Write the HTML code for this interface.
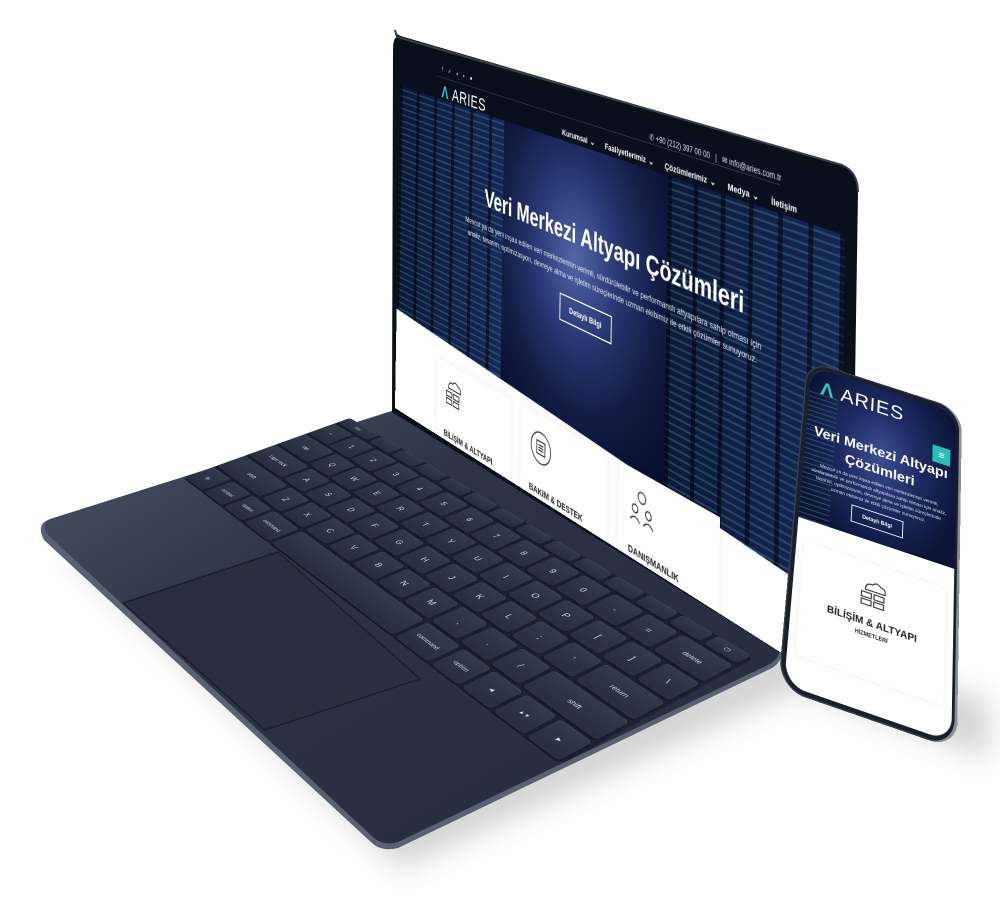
<!DOCTYPE html>
<html><head><meta charset="utf-8"><style>
*{margin:0;padding:0;box-sizing:border-box}
body{width:1000px;height:904px;background:#fff;overflow:hidden;font-family:"Liberation Sans",sans-serif}
#wrap{position:relative;width:1000px;height:904px;overflow:hidden;background:#fff}
.hm{position:absolute;left:0;top:0;transform-origin:0 0}
#kb{width:1450px;height:550px;background:#1c2130;border-radius:20px}
.row{position:absolute;left:0;display:flex}
.k{height:100%;margin-right:10px;background:linear-gradient(#333a4c,#282e3f);border-radius:10px;color:#d4d8e2;font-size:24px;display:flex;align-items:center;justify-content:center;box-shadow:inset 0 2px 0 rgba(255,255,255,.08),0 3px 4px rgba(0,0,0,.5)}
#scr{width:1000px;height:640px;background:#fff;overflow:hidden}
#hero{position:absolute;left:0;top:0;width:1000px;height:540px;clip-path:polygon(0 0,100% 0,100% 100%,0 86%);background:radial-gradient(ellipse 260px 330px at 48% 45%,#5466a8 0%,#2b3a78 35%,#141c45 70%,#0a1030 100%)}
.rack{position:absolute;top:40px;bottom:0;background:repeating-linear-gradient(90deg,rgba(0,0,0,.55) 0 8px,rgba(0,0,0,0) 8px 52px),repeating-linear-gradient(0deg,rgba(90,220,170,.22) 0 3px,rgba(0,0,0,0) 3px 11px),linear-gradient(90deg,#0d1738,#182659)}
.card{position:absolute;background:#fff;box-shadow:0 0 12px rgba(0,0,0,.08);width:205px;height:210px;font-weight:bold;font-size:15px;color:#222}
#ph{width:380px;height:770px;border-radius:58px;background:#1b1f2a;box-shadow:inset -6px 0 0 #8a8e98,inset 0 0 0 3px #3a3f4c}
#phs{position:absolute;left:12px;top:12px;width:356px;height:746px;border-radius:46px;overflow:hidden;background:#fff}
</style></head><body><div id="wrap">
<svg width="1000" height="904" style="position:absolute;left:0;top:0">
<defs>
<linearGradient id="bg" x1="0" y1="0" x2="1" y2="1"><stop offset="0" stop-color="#4d5567"/><stop offset=".35" stop-color="#2e3446"/><stop offset="1" stop-color="#262c3c"/></linearGradient>
<filter id="bl"><feGaussianBlur stdDeviation="14"/></filter>
</defs>
<path d="M60,545 L400,870 L800,690 L990,760 L990,700 L800,640 Z" fill="#000" opacity=".16" filter="url(#bl)"/>
<path d="M48,520 Q36,525 44,540 L372,843 Q382,852 398,848 L772,668 Q782,662 782,650 L395,410 Z" fill="#5a6170"/>
<path d="M50,519 Q40,524 48,535 L374,838 Q384,846 398,842 L770,664 Q779,658 780,650 L395,410 Z" fill="url(#bg)"/>
<path d="M123,603 L278,552 L420,679 L265,730 Z" fill="#2a3040" stroke="#1b1f2c" stroke-width="1.5"/>
<path d="M395,30 Q396,35 404,37 L842,165 Q858,172 858,192 L850,700 L780,652 L392,412 L393,50 Q393,38 397,37 Z" fill="#0b0f19"/>
<path d="M395,30 L397,37 L842,165 Q858,172 858,192" fill="none" stroke="#3a3f4c" stroke-width="2"/>
</svg>
<div id="kb" class="hm">
<div class="row" style="top:0;height:45px"><div class="k" style="width:140px;font-size:16px">esc</div><div class="k" style="width:90px"></div><div class="k" style="width:90px"></div><div class="k" style="width:90px"></div><div class="k" style="width:90px"></div><div class="k" style="width:90px"></div><div class="k" style="width:90px"></div><div class="k" style="width:90px"></div><div class="k" style="width:90px"></div><div class="k" style="width:90px"></div><div class="k" style="width:90px"></div><div class="k" style="width:90px"></div><div class="k" style="width:90px"></div><div class="k" style="width:90px;font-size:18px">⏻</div></div>
<div class="row" style="top:55px;height:90px"><div class="k" style="width:90px">~</div><div class="k" style="width:90px">1</div><div class="k" style="width:90px">2</div><div class="k" style="width:90px">3</div><div class="k" style="width:90px">4</div><div class="k" style="width:90px">5</div><div class="k" style="width:90px">6</div><div class="k" style="width:90px">7</div><div class="k" style="width:90px">8</div><div class="k" style="width:90px">9</div><div class="k" style="width:90px">0</div><div class="k" style="width:90px">-</div><div class="k" style="width:90px">=</div><div class="k" style="width:140px;font-size:18px">delete</div></div>
<div class="row" style="top:155px;height:90px"><div class="k" style="width:140px;font-size:18px">tab</div><div class="k" style="width:90px">Q</div><div class="k" style="width:90px">W</div><div class="k" style="width:90px">E</div><div class="k" style="width:90px">R</div><div class="k" style="width:90px">T</div><div class="k" style="width:90px">Y</div><div class="k" style="width:90px">U</div><div class="k" style="width:90px">I</div><div class="k" style="width:90px">O</div><div class="k" style="width:90px">P</div><div class="k" style="width:90px">[</div><div class="k" style="width:90px">]</div><div class="k" style="width:90px">\</div></div>
<div class="row" style="top:255px;height:90px"><div class="k" style="width:165px;font-size:18px">caps lock</div><div class="k" style="width:90px">A</div><div class="k" style="width:90px">S</div><div class="k" style="width:90px">D</div><div class="k" style="width:90px">F</div><div class="k" style="width:90px">G</div><div class="k" style="width:90px">H</div><div class="k" style="width:90px">J</div><div class="k" style="width:90px">K</div><div class="k" style="width:90px">L</div><div class="k" style="width:90px">;</div><div class="k" style="width:90px">'</div><div class="k" style="width:165px;font-size:18px">return</div></div>
<div class="row" style="top:355px;height:90px"><div class="k" style="width:215px;font-size:18px">shift</div><div class="k" style="width:90px">Z</div><div class="k" style="width:90px">X</div><div class="k" style="width:90px">C</div><div class="k" style="width:90px">V</div><div class="k" style="width:90px">B</div><div class="k" style="width:90px">N</div><div class="k" style="width:90px">M</div><div class="k" style="width:90px">,</div><div class="k" style="width:90px">.</div><div class="k" style="width:90px">/</div><div class="k" style="width:215px;font-size:18px">shift</div></div>
<div class="row" style="top:455px;height:90px"><div class="k" style="width:90px;font-size:18px">fn</div><div class="k" style="width:90px;font-size:16px">control</div><div class="k" style="width:90px;font-size:16px">option</div><div class="k" style="width:115px;font-size:16px">command</div><div class="k" style="width:490px"></div><div class="k" style="width:115px;font-size:16px">command</div><div class="k" style="width:90px;font-size:16px">option</div><div class="k" style="width:90px;font-size:14px">◀</div><div class="k" style="width:90px;font-size:14px">▲▼</div><div class="k" style="width:90px;font-size:14px">▶</div></div>
</div>
<div id="scr" class="hm">
<div id="hero">
<div class="rack" style="left:0;width:300px"></div>
<div class="rack" style="left:680px;width:320px"></div>
<div style="position:absolute;left:0;top:0;width:1000px;height:70px;background:#0a0f1e"></div>
<div style="position:absolute;left:125px;top:12px;color:#fff;font-size:11px;letter-spacing:6px">f ✓ ▪ ▪ ●</div>
<div style="position:absolute;left:110px;top:32px;width:780px;height:1px;background:#3a4060"></div>
<div style="position:absolute;left:125px;top:40px;color:#fff;font-size:30px;letter-spacing:1px"><span style="color:#3cc6c0;font-weight:bold">Λ</span> ARIES</div>
<div style="position:absolute;left:640px;top:16px;color:#dfe3ee;font-size:12px">✆ +90 (212) 397 00 00 &nbsp; | &nbsp; ✉ info@aries.com.tr</div>
<div style="position:absolute;left:445px;top:50px;color:#fff;font-size:13px;font-weight:bold;word-spacing:2px">Kurumsal ⌄ &nbsp;&nbsp; Faaliyetlerimiz ⌄ &nbsp;&nbsp; Çözümlerimiz ⌄ &nbsp;&nbsp; Medya ⌄ &nbsp;&nbsp; İletişim</div>
<div style="position:absolute;left:40px;width:1000px;top:185px;text-align:center;color:#fff;font-size:40px;font-weight:bold">Veri Merkezi Altyapı Çözümleri</div>
<div style="position:absolute;left:180px;width:700px;top:245px;text-align:center;color:#e4e8f2;font-size:13px;line-height:20px">Mevcut ya da yeni inşaa edilen veri merkezlerinin verimli, sürdürülebilir ve performanslı altyapılara sahip olması için analiz, tasarım, optimizasyon, devreye alma ve işletim süreçlerinde uzman ekibimiz ile etkili çözümler sunuyoruz.</div>
<div style="position:absolute;left:445px;top:305px;width:120px;height:42px;border:2px solid #fff;color:#fff;font-size:13px;font-weight:bold;text-align:center;line-height:38px">Detaylı Bilgi</div>
</div>
<div class="card" style="left:125px;top:510px"><svg width="60" height="50" style="position:absolute;left:20px;top:20px" fill="none" stroke="#333" stroke-width="2"><path d="M14,20 Q14,8 26,10 Q32,2 40,10 Q50,10 48,20 Z"/><rect x="8" y="26" width="16" height="8"/><rect x="28" y="26" width="16" height="8"/><rect x="8" y="38" width="16" height="8"/><rect x="28" y="38" width="16" height="8"/></svg><div style="position:absolute;left:22px;top:110px">BİLİŞİM &amp; ALTYAPI<br><span style="font-size:11px">HİZMETLERİ</span></div><div style="position:absolute;right:20px;bottom:25px;color:#aaa">→</div></div>
<div class="card" style="left:355px;top:510px"><svg width="60" height="60" style="position:absolute;left:20px;top:20px" fill="none" stroke="#333" stroke-width="2"><circle cx="30" cy="30" r="24"/><rect x="20" y="20" width="20" height="20"/><path d="M24,26h12M24,30h12M24,34h12"/></svg><div style="position:absolute;left:22px;top:110px">BAKIM &amp; DESTEK<br><span style="font-size:11px">HİZMETLERİ</span></div><div style="position:absolute;right:20px;bottom:25px;color:#aaa">→</div></div>
<div class="card" style="left:585px;top:510px"><svg width="60" height="60" style="position:absolute;left:20px;top:20px" fill="none" stroke="#333" stroke-width="2"><circle cx="30" cy="16" r="8"/><circle cx="16" cy="36" r="6"/><circle cx="44" cy="36" r="6"/><path d="M6,54 Q16,42 26,54M34,54 Q44,42 54,54"/></svg><div style="position:absolute;left:22px;top:110px">DANIŞMANLIK<br><span style="font-size:11px">HİZMETLERİ</span></div><div style="position:absolute;right:20px;bottom:25px;color:#aaa">→</div></div>
</div>
<div id="ph" class="hm"><div id="phs">
<div style="position:absolute;left:0;top:0;width:356px;height:380px;background:radial-gradient(ellipse 200px 260px at 50% 45%,#3d4f93 0%,#1c2860 50%,#0c1334 100%)"></div>
<div style="position:absolute;left:0;top:60px;width:70px;height:320px;background:repeating-linear-gradient(0deg,rgba(90,220,170,.25) 0 3px,rgba(0,0,0,0) 3px 12px)"></div>
<div style="position:absolute;left:26px;top:22px;color:#fff;font-size:48px;letter-spacing:2px"><span style="color:#3cc6c0;font-weight:bold">Λ</span> ARIES</div>
<div style="position:absolute;left:300px;top:100px;width:42px;height:42px;background:#2bbfb3;color:#fff;font-size:26px;text-align:center;line-height:40px">≡</div>
<div style="position:absolute;left:0;width:356px;top:140px;text-align:center;color:#fff;font-size:34px;font-weight:bold;line-height:44px">Veri Merkezi Altyapı<br>Çözümleri</div>
<div style="position:absolute;left:20px;width:316px;top:235px;text-align:center;color:#e4e8f2;font-size:11px;line-height:16px">Mevcut ya da yeni inşaa edilen veri merkezlerinin verimli, sürdürülebilir ve performanslı altyapılara sahip olması için analiz, tasarım, optimizasyon, devreye alma ve işletim süreçlerinde uzman ekibimiz ile etkili çözümler sunuyoruz.</div>
<div style="position:absolute;left:118px;top:310px;width:120px;height:40px;border:2px solid #fff;color:#fff;font-size:12px;font-weight:bold;text-align:center;line-height:36px">Detaylı Bilgi</div>
<div style="position:absolute;left:18px;top:430px;width:320px;height:250px;background:#fff;box-shadow:0 0 10px rgba(0,0,0,.07)"></div>
<svg width="80" height="70" style="position:absolute;left:138px;top:465px" fill="none" stroke="#333" stroke-width="2.5"><path d="M22,26 Q22,10 38,12 Q46,2 56,12 Q68,12 66,26 Z"/><rect x="14" y="32" width="22" height="11"/><rect x="42" y="32" width="22" height="11"/><rect x="14" y="48" width="22" height="11"/><rect x="42" y="48" width="22" height="11"/></svg>
<div style="position:absolute;left:0;width:356px;top:548px;text-align:center;color:#222;font-size:22px;font-weight:bold">BİLİŞİM &amp; ALTYAPI</div>
<div style="position:absolute;left:0;width:356px;top:580px;text-align:center;color:#222;font-size:12px;font-weight:bold">HİZMETLERİ</div>
</div></div>
</div>
<script>
function hm(id,w,h,q){
var x0=q[0],y0=q[1],x1=q[2],y1=q[3],x2=q[4],y2=q[5],x3=q[6],y3=q[7];
var dx1=x1-x2,dx2=x3-x2,dx3=x0-x1+x2-x3,dy1=y1-y2,dy2=y3-y2,dy3=y0-y1+y2-y3;
var den=dx1*dy2-dx2*dy1;
var g=(dx3*dy2-dx2*dy3)/den,hh=(dx1*dy3-dx3*dy1)/den;
var a=x1-x0+g*x1,b=x3-x0+hh*x3,c=x0,d=y1-y0+g*y1,e=y3-y0+hh*y3,f=y0;
var m=[a/w,d/w,0,g/w,b/h,e/h,0,hh/h,0,0,1,0,c,f,0,1];
document.getElementById(id).style.transform='matrix3d('+m.join(',')+')';
}
hm('kb',1450,550,[350,418,755,658,560,765,183,478]);
hm('scr',1000,640,[401,46,846,180,840,690,395,408]);
hm('ph',380,770,[807,360,962,410,957,750,778,688]);
</script>
</body></html>
